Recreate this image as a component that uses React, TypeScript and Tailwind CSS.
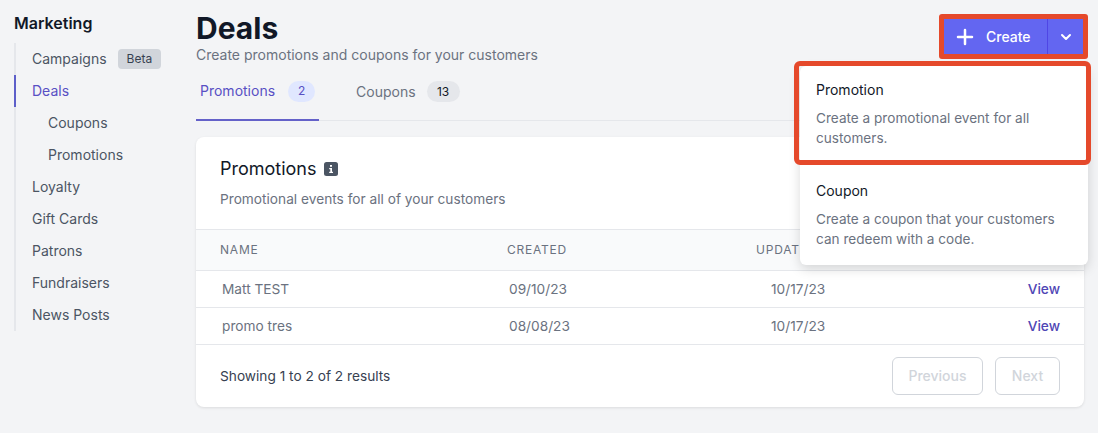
import React from 'react';
import { Plus, ChevronDown } from 'lucide-react';

const navItems = [
    { label: 'Campaigns', badge: 'Beta' },
    { label: 'Deals', active: true },
    { label: 'Coupons', sub: true },
    { label: 'Promotions', sub: true },
    { label: 'Loyalty' },
    { label: 'Gift Cards' },
    { label: 'Patrons' },
    { label: 'Fundraisers' },
    { label: 'News Posts' },
];

const rows = [
    { name: 'Matt TEST', created: '09/10/23', updated: '10/17/23' },
    { name: 'promo tres', created: '08/08/23', updated: '10/17/23' },
];

const Sidebar: React.FC = () => (
    <aside className="w-[182px] shrink-0 pt-[13px]">
        <h2 className="text-base leading-5 font-semibold text-[#111827]">Marketing</h2>
        <ul className="mt-[10px] border-l-2 border-[#e5e7eb]">
            {navItems.map((item) => (
                <li
                    key={item.label}
                    className={`-ml-0.5 h-8 flex items-center gap-[11px] border-l-2 text-sm ${item.sub ? 'pl-[32px]' : 'pl-4'} ${
                        item.active ? 'border-[#5d5fc9] text-[#5850c4]' : 'border-transparent text-[#4b5563]'
                    }`}
                >
                    {item.label}
                    {item.badge && (
                        <span className="h-5 px-[9px] flex items-center rounded bg-[#d1d5db] text-xs font-normal text-[#374151]">
                            {item.badge}
                        </span>
                    )}
                </li>
            ))}
        </ul>
    </aside>
);

const Tabs: React.FC = () => (
    <div className="mt-[9px] h-[47px] flex gap-[37px] border-b border-[#e5e7eb]">
        <div className="h-[47px] px-1 flex items-center gap-[13px] border-b-2 border-[#6461c9] pb-[11px] text-sm text-[#5850c4]">
            Promotions
            <span className="h-[21px] w-[27px] flex items-center justify-center rounded-full bg-[#e0e7ff] text-xs text-[#5850c4]">2</span>
        </div>
        <div className="h-[47px] flex items-center gap-[11px] pb-[12px] text-sm text-[#6b7280]">
            Coupons
            <span className="h-[21px] w-[33px] flex items-center justify-center rounded-full bg-[#e5e7eb] text-xs text-[#111827]">13</span>
        </div>
    </div>
);

const PromotionsCard: React.FC = () => (
    <section className="mt-4 rounded-lg bg-white shadow-[0_1px_3px_rgba(0,0,0,0.1)]">
        <div className="h-[93px] px-6 pt-[20px] border-b border-[#e5e7eb]">
            <div className="flex items-center gap-[7px] text-lg leading-6 font-normal text-[#111827]">
                Promotions
                <svg width="14" height="14" viewBox="0 0 14 14">
                    <rect width="14" height="14" rx="2.5" fill="#4b5563" />
                    <rect x="6" y="3" width="2" height="1.8" fill="#fff" />
                    <path d="M5.2 6h2.8v3.8h1v1.2H5.2V9.8h1.1V7.2H5.2z" fill="#fff" />
                </svg>
            </div>
            <p className="mt-[8px] text-[13.7px] leading-5 text-[#6b7280]">Promotional events for all of your customers</p>
        </div>
        <div className="h-[41px] grid grid-cols-[287px_249px_1fr] items-center px-6 bg-[#f9fafb] border-b border-[#e5e7eb] text-xs tracking-[0.065em] text-[#6b7280]">
            <span>NAME</span>
            <span>CREATED</span>
            <span>UPDATED</span>
        </div>
        {rows.map((row) => (
            <div
                key={row.name}
                className="h-[37px] grid grid-cols-[287px_262px_1fr_auto] items-center pl-[26px] pr-6 border-b border-[#e5e7eb] text-[13.7px] text-[#6b7280]"
            >
                <span>{row.name}</span>
                <span>{row.created}</span>
                <span>{row.updated}</span>
                <span className="font-medium text-[#4f46b5]">View</span>
            </div>
        ))}
        <div className="h-[62px] flex items-center justify-between px-6">
            <p className="text-[13.7px] text-[#374151]">Showing 1 to 2 of 2 results</p>
            <div className="flex gap-3">
                <button className="h-[38px] w-[91px] rounded-md border border-[#d1d5db] text-sm font-medium text-[#d1d5db]">Previous</button>
                <button className="h-[38px] w-[65px] rounded-md border border-[#d1d5db] text-sm font-medium text-[#d1d5db]">Next</button>
            </div>
        </div>
    </section>
);

// Split button plus its open menu, both lie over the page
const CreateMenu: React.FC = () => (
    <>
        <div className="absolute left-[743px] top-[14px] border-[5px] border-[#e5492b] rounded-[3px]">
            <div className="w-[139px] h-[35px] flex bg-[#6366f1] text-white">
                <div className="w-[103px] flex items-center gap-[9px] pl-[9px] text-sm font-medium">
                    <Plus size={24} strokeWidth={2.5} />
                    Create
                </div>
                <div className="flex-1 flex items-center justify-center border-l border-[#4f46e5]">
                    <ChevronDown size={16} strokeWidth={3} />
                </div>
            </div>
        </div>
        <div className="absolute left-[604px] top-[66px] w-[288px] h-[199px] rounded-md bg-white shadow-[0_4px_12px_rgba(0,0,0,0.15)]">
            <div className="h-[99px] px-4 pt-[14px]">
                <div className="text-sm leading-5 font-normal text-[#111827]">Promotion</div>
                <p className="mt-2 text-[13.6px] leading-5 text-[#6b7280]">Create a promotional event for all customers.</p>
            </div>
            <div className="h-[100px] px-4 pt-[16px]">
                <div className="text-sm leading-5 font-normal text-[#111827]">Coupon</div>
                <p className="mt-2 text-[13.6px] leading-5 text-[#6b7280]">Create a coupon that your customers can redeem with a code.</p>
            </div>
        </div>
        <div className="absolute left-[598px] top-[61px] w-[297px] h-[104px] border-[5px] border-[#e5492b] rounded-md"></div>
    </>
);

export default function App() {
    return (
        <div className="w-[1098px] h-[433px] overflow-hidden flex bg-[#f3f4f6] pl-[14px] font-['Inter',sans-serif]">
            <Sidebar />
            <main className="relative w-[888px] pt-[12px]">
                <h1 className="text-3xl leading-8 font-bold text-[#111827]">Deals</h1>
                <p className="mt-[1px] text-sm leading-5 text-[#6b7280]">Create promotions and coupons for your customers</p>
                <Tabs />
                <PromotionsCard />
                <CreateMenu />
            </main>
        </div>
    );
}
